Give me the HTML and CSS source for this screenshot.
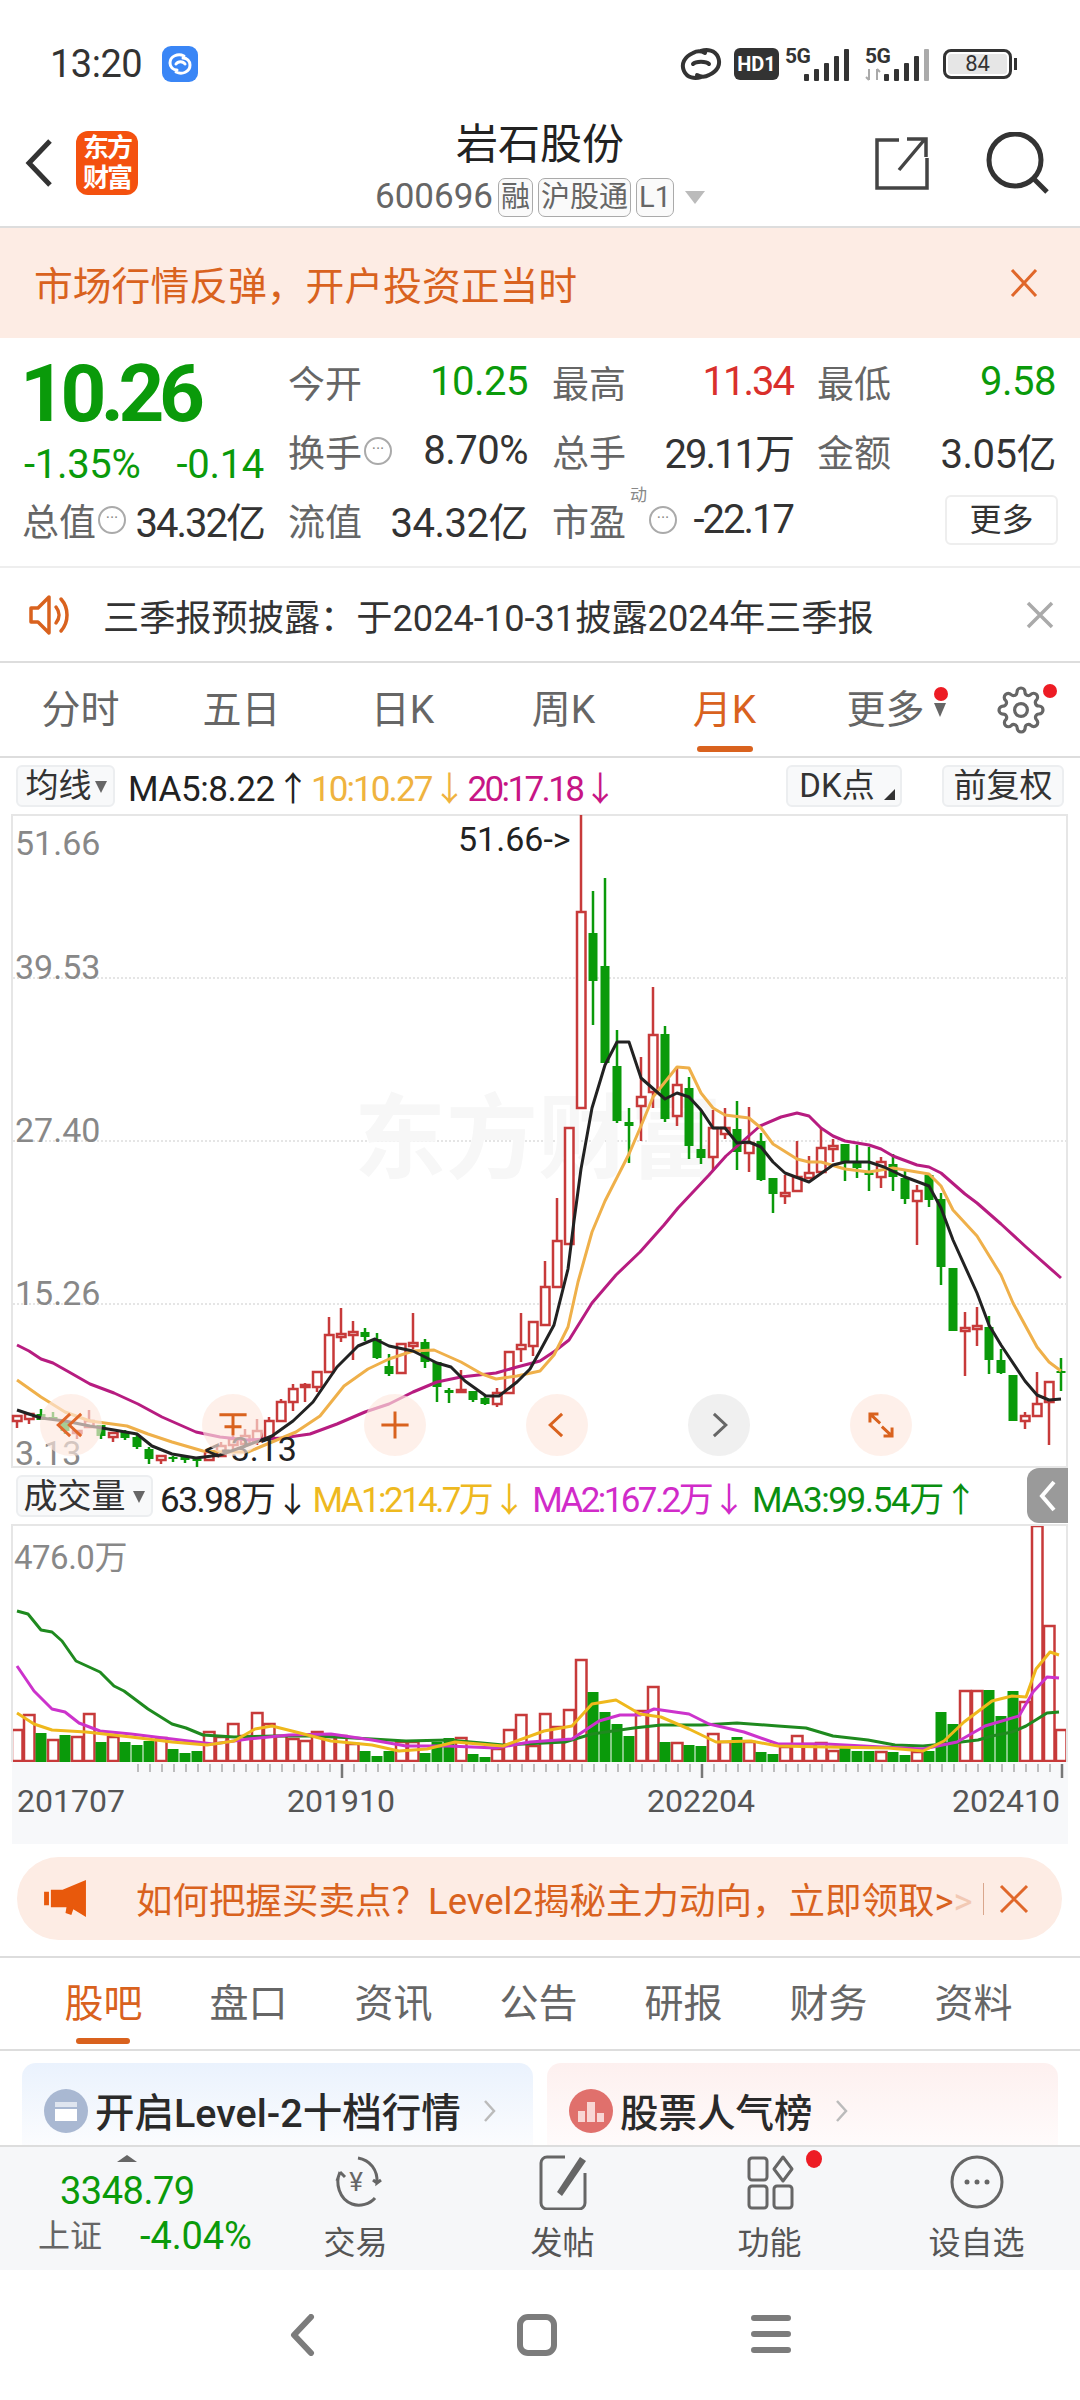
FILE: index.html
```html
<!DOCTYPE html>
<html lang="zh-CN">
<head>
    <meta charset="UTF-8">
    <meta name="viewport" content="width=device-width, initial-scale=1.0">
    <title>岩石股份</title>
    <link rel="stylesheet" href="styles.css">
</head>
<body>
    <div class="status">
        <span class="clock">13:20</span>
        <svg class="app-badge" viewBox="0 0 36 36">
            <rect width="36" height="36" rx="9" fill="#3a86f6"/>
            <path d="M22 10c-6-3-14 0-14 7 0 4 3 7 7 7M14 26c6 3 14 0 14-7 0-4-3-7-7-7M14 18c2-3 7-3 9 0" fill="none" stroke="#fff" stroke-width="3" stroke-linecap="round"/>
        </svg>
        <div class="status-right">
            <svg class="st-link" viewBox="0 0 44 34">
                <path d="M26 6a12 12 0 0 0-12 0C5 10 2 17 5 24c3 7 11 8 17 6M18 28a12 12 0 0 0 12 0c9-4 12-11 9-18-3-7-11-8-17-6M14 17c3-3 13-3 16 0" fill="none" stroke="#333" stroke-width="4" stroke-linecap="round"/>
            </svg>
            <span class="hd">HD1</span>
            <svg class="st-signal" viewBox="0 0 66 34">
                <text x="0" y="16" class="st-5g">5G</text>
                <rect x="19" y="27" width="5" height="7" rx="1" fill="#333"/>
                <rect x="29" y="22" width="5" height="12" rx="1" fill="#333"/>
                <rect x="39" y="16" width="5" height="18" rx="1" fill="#333"/>
                <rect x="49" y="9" width="5" height="25" rx="1" fill="#333"/>
                <rect x="59" y="2" width="5" height="32" rx="1" fill="#333"/>
            </svg>
            <svg class="st-signal" viewBox="0 0 66 34">
                <text x="0" y="16" class="st-5g">5G</text>
                <path d="M4 22v11M1 30l3 3M12 33v-11M15 25l-3-3" stroke="#aaa" stroke-width="2" fill="none"/>
                <rect x="19" y="27" width="5" height="7" rx="1" fill="#333"/>
                <rect x="29" y="22" width="5" height="12" rx="1" fill="#333"/>
                <rect x="39" y="16" width="5" height="18" rx="1" fill="#333"/>
                <rect x="49" y="9" width="5" height="25" rx="1" fill="#333"/>
                <rect x="59" y="2" width="5" height="32" rx="1" fill="#aaa"/>
            </svg>
            <span class="battery"><span class="battery-level">84</span></span>
        </div>
    </div>

    <header class="header">
        <div class="header-left">
            <svg class="back" viewBox="0 0 28 50"><path d="M25 3L4 25l21 22" fill="none" stroke="#333" stroke-width="5"/></svg>
            <div class="logo">东方<br>财富</div>
        </div>
        <div class="header-mid">
            <div class="title">岩石股份</div>
            <div class="sub">
                <span class="code">600696</span>
                <span class="tag">融</span>
                <span class="tag">沪股通</span>
                <span class="tag">L1</span>
                <span class="sub-caret"></span>
            </div>
        </div>
        <div class="header-right">
            <svg class="share" viewBox="0 0 54 54"><path d="M24 4H2v48h50V22M24 34L50 3M32 3h19v18" fill="none" stroke="#444" stroke-width="3.5"/></svg>
            <svg class="search" viewBox="0 0 66 62"><circle cx="30" cy="28" r="26" fill="none" stroke="#333" stroke-width="5"/><path d="M48 46l14 14" stroke="#333" stroke-width="5"/></svg>
        </div>
    </header>

    <div class="banner">
        <span>市场行情反弹&#xFF0C;开户投资正当时</span>
        <svg class="banner-x" viewBox="0 0 28 28"><path d="M2 1l24 26M26 1L2 27" stroke="#e0672a" stroke-width="3"/></svg>
    </div>

    <section class="quote">
        <div class="price-box">
            <div class="price">10.26</div>
            <div class="price-change"><span>-1.35%</span><span>-0.14</span></div>
        </div>
        <div class="stat"><span class="lbl">今开</span><span class="val green">10.25</span></div>
        <div class="stat"><span class="lbl">最高</span><span class="val red tight">11.34</span></div>
        <div class="stat"><span class="lbl">最低</span><span class="val green">9.58</span></div>
        <div class="stat"><span class="lbl">换手<i class="dots">···</i></span><span class="val">8.70%</span></div>
        <div class="stat"><span class="lbl">总手</span><span class="val tight">29.11万</span></div>
        <div class="stat"><span class="lbl">金额</span><span class="val">3.05亿</span></div>
        <div class="stat stat-first"><span class="lbl">总值<i class="dots">···</i></span><span class="val tight">34.32亿</span></div>
        <div class="stat"><span class="lbl">流值</span><span class="val">34.32亿</span></div>
        <div class="stat"><span class="lbl">市盈<sup class="dyn">动</sup><i class="dots">···</i></span><span class="val tight">-22.17</span></div>
        <div class="stat stat-more"><span class="more-btn">更多</span></div>
    </section>

    <div class="notice">
        <svg class="speaker" viewBox="0 0 48 42">
            <path d="M3 14h7L21 3v36L10 28H3z" fill="none" stroke="#d9621e" stroke-width="3.5" stroke-linejoin="round"/>
            <path d="M28 13c4 5 4 11 0 16M33 5c8 9 8 23 0 32" fill="none" stroke="#d9621e" stroke-width="3.5" stroke-linecap="round"/>
        </svg>
        <span class="notice-text">三季报预披露&#xFF1A;于2024-10-31披露2024年三季报</span>
        <svg class="notice-x" viewBox="0 0 30 30"><path d="M3 3l24 24M27 3L3 27" stroke="#aaa" stroke-width="3.5"/></svg>
    </div>

    <nav class="period-tabs">
        <span>分时</span>
        <span>五日</span>
        <span>日K</span>
        <span>周K</span>
        <span class="active">月K</span>
        <span class="more-tab">更多<i class="tab-caret"></i><i class="red-dot"></i></span>
        <span class="gear-tab">
            <svg class="gear" viewBox="0 0 24 24"><circle cx="12" cy="12" r="3.2" fill="none" stroke="#666" stroke-width="1.6"/><path d="M19.4 15a1.65 1.65 0 0 0 .33 1.82l.06.06a2 2 0 0 1 0 2.83 2 2 0 0 1-2.83 0l-.06-.06a1.65 1.65 0 0 0-1.82-.33 1.65 1.65 0 0 0-1 1.51V21a2 2 0 0 1-2 2 2 2 0 0 1-2-2v-.09A1.65 1.65 0 0 0 9 19.4a1.65 1.65 0 0 0-1.82.33l-.06.06a2 2 0 0 1-2.83 0 2 2 0 0 1 0-2.83l.06-.06a1.65 1.65 0 0 0 .33-1.82 1.65 1.65 0 0 0-1.51-1H3a2 2 0 0 1-2-2 2 2 0 0 1 2-2h.09A1.65 1.65 0 0 0 4.6 9a1.65 1.65 0 0 0-.33-1.82l-.06-.06a2 2 0 0 1 0-2.83 2 2 0 0 1 2.83 0l.06.06a1.65 1.65 0 0 0 1.82.33H9a1.65 1.65 0 0 0 1-1.51V3a2 2 0 0 1 2-2 2 2 0 0 1 2 2v.09a1.65 1.65 0 0 0 1 1.51 1.65 1.65 0 0 0 1.82-.33l.06-.06a2 2 0 0 1 2.83 0 2 2 0 0 1 0 2.83l-.06.06a1.65 1.65 0 0 0-.33 1.82V9a1.65 1.65 0 0 0 1.51 1H21a2 2 0 0 1 2 2 2 2 0 0 1-2 2h-.09a1.65 1.65 0 0 0-1.51 1z" fill="none" stroke="#666" stroke-width="1.6"/></svg>
            <i class="red-dot gear-dot"></i>
        </span>
    </nav>

    <div class="ma-bar">
        <span class="pick pick-ma">均线<i class="pick-caret"></i></span>
        <span class="ma ma-black ma5">MA5:8.22<b>↑</b></span>
        <span class="ma ma-orange">10:10.27<b>↓</b></span>
        <span class="ma ma-purple">20:17.18<b>↓</b></span>
        <span class="pick pick-dk">DK点<i class="corner"></i></span>
        <span class="pick pick-fq">前复权</span>
    </div>

    <div class="chart-box kline-box">
        <svg id="kline" class="kline" viewBox="13 817 1053 650"></svg>
        <div class="chart-tools">
            <span class="tool"><svg viewBox="0 0 40 40"><path d="M19 7L5 20l14 13M32 7L18 20l14 13" fill="none" stroke="#e0672a" stroke-width="3.5"/></svg></span>
            <span class="tool"><svg viewBox="0 0 40 40"><path d="M4 8h32M20 8v24M10 22h20" fill="none" stroke="#d9621e" stroke-width="3.5"/></svg></span>
            <span class="tool"><svg viewBox="0 0 40 40"><path d="M4 20h32M20 4v32" fill="none" stroke="#d9621e" stroke-width="3.5"/></svg></span>
            <span class="tool"><svg viewBox="0 0 40 40"><path d="M26 7L12 20l14 13" fill="none" stroke="#d9621e" stroke-width="3.5"/></svg></span>
            <span class="tool tool-gray"><svg viewBox="0 0 40 40"><path d="M14 7l14 13-14 13" fill="none" stroke="#666" stroke-width="3.5"/></svg></span>
            <span class="tool"><svg viewBox="0 0 40 40"><path d="M7 17V7h10M7 7l12 11M33 23v10H23M33 33L21 22" fill="none" stroke="#d9621e" stroke-width="3.5"/></svg></span>
        </div>
    </div>

    <div class="vol-bar">
        <span class="pick pick-vol">成交量<i class="pick-caret"></i></span>
        <span class="ma ma-black vol-now">63.98万<b>↓</b></span>
        <span class="ma ma-yellow">MA1:214.7万<b>↓</b></span>
        <span class="ma ma-pink">MA2:167.2万<b>↓</b></span>
        <span class="ma ma-green">MA3:99.54万<b>↑</b></span>
        <span class="vol-tab"><svg viewBox="0 0 20 34"><path d="M16 3L4 17l12 14" fill="none" stroke="#fff" stroke-width="4"/></svg></span>
    </div>

    <div class="chart-box vol-box">
        <svg id="volume" class="volume" viewBox="13 1527 1053 236"></svg>
    </div>
    <svg id="axis" class="axis" viewBox="12 1763 1056 82"></svg>

    <div class="promo">
        <svg class="mega" viewBox="0 0 44 38"><path d="M0 12h5v14H0zM7 10h12L43 0v38L30 30l-2 6-6-2 1-6H7z" fill="#e8590c"/></svg>
        <span class="promo-text">如何把握买卖点&#xFF1F;Level2揭秘主力动向&#xFF0C;立即领取&gt;<em>&gt;</em></span>
        <i class="promo-sep"></i>
        <svg class="promo-x" viewBox="0 0 30 30"><path d="M2 2l26 26M28 2L2 28" stroke="#e0672a" stroke-width="3"/></svg>
    </div>

    <nav class="info-tabs">
        <span class="active">股吧</span>
        <span>盘口</span>
        <span>资讯</span>
        <span>公告</span>
        <span>研报</span>
        <span>财务</span>
        <span>资料</span>
    </nav>

    <div class="cards">
        <div class="card card-blue">
            <svg class="card-icon" viewBox="0 0 44 44"><circle cx="22" cy="22" r="22" fill="#a9b8d2"/><rect x="11" y="13" width="22" height="5" fill="#dfe5ef"/><rect x="11" y="20" width="22" height="12" fill="#fff"/></svg>
            <span class="card-text">开启Level-2十档行情</span>
            <svg class="card-arrow" viewBox="0 0 14 24"><path d="M2 2l9 10-9 10" fill="none" stroke="#bbb" stroke-width="2.5"/></svg>
        </div>
        <div class="card card-red">
            <svg class="card-icon" viewBox="0 0 44 44"><circle cx="22" cy="22" r="22" fill="#e0706c"/><path d="M9 33V22h7v11zM18 33V13h8v20zM28 33V24h7v9z" fill="#f8d6d4"/></svg>
            <span class="card-text">股票人气榜</span>
            <svg class="card-arrow" viewBox="0 0 14 24"><path d="M2 2l9 10-9 10" fill="none" stroke="#bbb" stroke-width="2.5"/></svg>
        </div>
    </div>

    <footer class="dock">
        <div class="index">
            <i class="index-caret"></i>
            <div class="index-val">3348.79</div>
            <div class="index-row"><span class="index-name">上证</span><span class="index-pct">-4.04%</span></div>
        </div>
        <div class="dock-item">
            <svg class="dock-icon" viewBox="0 0 60 56">
                <path d="M14 18c-5 11-1 27 12 32 8 3 18 0 23-6M32 4c12 2 20 12 19 25l4-3M51 29l-4-3M14 18l-3 9M14 18l5 5" fill="none" stroke="#666" stroke-width="3"/>
                <text x="30" y="37" class="dock-yen">¥</text>
            </svg>
            <span>交易</span>
        </div>
        <div class="dock-item">
            <svg class="dock-icon" viewBox="0 0 60 56">
                <path d="M32 3H14a6 6 0 0 0-6 6v40a6 6 0 0 0 6 6h32a6 6 0 0 0 6-6V19" fill="none" stroke="#666" stroke-width="3"/>
                <path d="M24 38L47 3l6 4-24 35z" fill="#666"/>
            </svg>
            <span>发帖</span>
        </div>
        <div class="dock-item">
            <svg class="dock-icon" viewBox="0 0 60 56">
                <rect x="9" y="4" width="18" height="22" rx="3" fill="none" stroke="#666" stroke-width="3"/>
                <rect x="9" y="32" width="18" height="22" rx="3" fill="none" stroke="#666" stroke-width="3"/>
                <rect x="34" y="32" width="18" height="22" rx="3" fill="none" stroke="#666" stroke-width="3"/>
                <path d="M43 3l9 12-9 12-9-12z" fill="none" stroke="#666" stroke-width="3" stroke-linejoin="round"/>
            </svg>
            <i class="red-dot dock-dot"></i>
            <span>功能</span>
        </div>
        <div class="dock-item">
            <svg class="dock-icon" viewBox="0 0 60 56">
                <circle cx="30" cy="28" r="25" fill="none" stroke="#666" stroke-width="3"/>
                <circle cx="20" cy="28" r="2.5" fill="#666"/><circle cx="30" cy="28" r="2.5" fill="#666"/><circle cx="40" cy="28" r="2.5" fill="#666"/>
            </svg>
            <span>设自选</span>
        </div>
    </footer>

    <div class="sysnav">
        <svg class="sys-back" viewBox="0 0 26 42"><path d="M22 3L5 21l17 18" fill="none" stroke="#7c7c7c" stroke-width="6" stroke-linecap="round" stroke-linejoin="round"/></svg>
        <svg class="sys-home" viewBox="0 0 40 42"><rect x="3" y="3" width="34" height="36" rx="8" fill="none" stroke="#7c7c7c" stroke-width="6"/></svg>
        <svg class="sys-menu" viewBox="0 0 40 40"><path d="M3 4h34M3 20h34M3 36h34" stroke="#7c7c7c" stroke-width="6" stroke-linecap="round"/></svg>
    </div>

    <script src="chart.js"></script>
</body>
</html>
```

FILE: styles.css
```css
* {
    box-sizing: border-box;
}

body {
    margin: 0;
    width: 1080px;
    height: 2400px;
    overflow: hidden;
    background: #fff;
    color: #333;
    font-family: Roboto, "Noto Sans CJK SC", sans-serif;
}

i, em {
    font-style: normal;
}

/* status bar */
.status {
    height: 110px;
    padding: 46px 68px 0 50px;
    display: flex;
    align-items: flex-start;
}

.clock {
    font-size: 38px;
    line-height: 36px;
    color: #333;
    letter-spacing: -0.5px;
}

.app-badge {
    width: 36px;
    height: 36px;
    margin-left: 20px;
}

.status-right {
    margin-left: auto;
    display: flex;
    align-items: center;
    height: 36px;
}

.st-link {
    width: 44px;
    height: 34px;
}

.hd {
    margin-left: 11px;
    width: 45px;
    height: 32px;
    line-height: 32px;
    background: #333;
    color: #fff;
    border-radius: 6px;
    font-size: 20px;
    font-weight: 700;
    text-align: center;
}

.st-signal {
    margin-left: 6px;
    width: 66px;
    height: 34px;
    overflow: visible;
}

.st-signal + .st-signal {
    margin-left: 14px;
}

.st-5g {
    font-size: 21px;
    font-weight: 700;
    fill: #333;
    letter-spacing: -0.5px;
}

.battery {
    margin-left: 12px;
    width: 69px;
    height: 30px;
    border: 3px solid #333;
    border-radius: 8px;
    padding: 2px;
    position: relative;
}

.battery::after {
    content: "";
    position: absolute;
    right: -8px;
    top: 6px;
    width: 3px;
    height: 12px;
    background: #333;
}

.battery-level {
    display: block;
    height: 20px;
    line-height: 20px;
    background: #e6e6e6;
    border-radius: 3px;
    font-size: 22px;
    text-align: center;
}

/* header */
.header {
    height: 118px;
    display: grid;
    grid-template-columns: 240px 1fr 240px;
    border-bottom: 2px solid #ddd;
}

.header-left {
    display: flex;
    align-items: center;
    padding: 0 0 10px 25px;
}

.back {
    width: 28px;
    height: 50px;
}

.logo {
    margin-left: 23px;
    width: 62px;
    height: 64px;
    padding-top: 2px;
    border-radius: 12px;
    background: #f4510f;
    color: #fff;
    font-size: 26px;
    line-height: 30px;
    font-weight: 700;
    text-align: center;
    letter-spacing: -2px;
}

.header-mid {
    text-align: center;
    padding-top: 10px;
}

.title {
    font-size: 42px;
    line-height: 50px;
    color: #222;
}

.sub {
    margin-top: 7px;
    display: flex;
    justify-content: center;
    align-items: center;
    gap: 5px;
}

.code {
    font-size: 35px;
    line-height: 40px;
    color: #666;
}

.tag {
    height: 39px;
    padding: 0 2px;
    line-height: 36px;
    border: 1.5px solid #aaa;
    border-radius: 7px;
    background: #fafafa;
    color: #666;
    font-size: 29px;
}

.sub-caret {
    margin-left: 6px;
    border-left: 10px solid transparent;
    border-right: 10px solid transparent;
    border-top: 13px solid #bbb;
}

.header-right {
    display: flex;
    justify-content: flex-end;
    align-items: center;
    gap: 56px;
    padding: 0 29px 10px 0;
}

.share {
    width: 54px;
    height: 54px;
}

.search {
    width: 66px;
    height: 62px;
}

/* open account banner */
.banner {
    height: 110px;
    padding: 0 42px 0 34px;
    display: flex;
    align-items: center;
    justify-content: space-between;
    background: #fdece4;
    color: #d9621e;
    font-size: 38.8px;
}

.banner-x {
    width: 28px;
    height: 28px;
}

/* quote block */
.quote {
    height: 230px;
    padding: 9px 24px 0;
    display: grid;
    grid-template-columns: 240px 240px 241px 239px;
    grid-template-rows: repeat(3, 69px);
    column-gap: 24px;
    border-bottom: 2px solid #eee;
}

.price-box {
    grid-row: span 2;
}

.price {
    padding-top: 5px;
    font-size: 80px;
    line-height: 84px;
    font-weight: 700;
    color: #0a9a0a;
    letter-spacing: -5.5px;
    margin-left: -4px;
}

.price-change {
    margin-top: 7px;
    display: flex;
    justify-content: space-between;
    font-size: 40px;
    line-height: 44px;
    color: #0a9a0a;
    letter-spacing: -0.3px;
}

.stat {
    display: flex;
    justify-content: space-between;
    align-items: center;
    font-size: 37px;
}

.stat-first {
    margin-left: -2px;
}

.lbl {
    color: #666;
    display: flex;
    align-items: center;
    position: relative;
}

.val {
    color: #333;
    font-size: 40px;
    letter-spacing: -0.5px;
}

.val.tight {
    letter-spacing: -2px;
}

.val.green {
    color: #0a9a0a;
}

.val.red {
    color: #d9302c;
}

.dots {
    margin-left: 2px;
    width: 28px;
    height: 28px;
    line-height: 20px;
    border: 2px solid #aaa;
    border-radius: 50%;
    color: #888;
    font-size: 16px;
    text-align: center;
}

.dyn {
    position: absolute;
    left: 78px;
    top: -8px;
    font-size: 17px;
    line-height: 20px;
    color: #888;
}

.lbl .dyn + .dots {
    margin-left: 23px;
}

.stat-more {
    justify-content: flex-end;
    margin-right: -2px;
}

.more-btn {
    width: 113px;
    height: 50px;
    line-height: 46px;
    border: 2px solid #eee;
    border-radius: 6px;
    font-size: 32px;
    text-align: center;
    color: #333;
}

/* notice */
.notice {
    height: 95px;
    padding: 0 25px 0 28px;
    display: flex;
    align-items: center;
    border-bottom: 2px solid #ddd;
}

.speaker {
    width: 48px;
    height: 42px;
}

.notice-text {
    margin-left: 27px;
    font-size: 36.2px;
    color: #333;
}

.notice-x {
    margin-left: auto;
    width: 30px;
    height: 30px;
}

/* period tabs */
.period-tabs {
    height: 95px;
    display: grid;
    grid-template-columns: repeat(6, 161px) 1fr;
    border-bottom: 2px solid #ddd;
    font-size: 39px;
    color: #666;
    text-align: center;
}

.period-tabs span {
    position: relative;
    line-height: 95px;
}

.period-tabs .active {
    color: #d9621e;
}

.period-tabs .active::after {
    content: "";
    position: absolute;
    left: 53px;
    bottom: 6px;
    width: 56px;
    height: 6px;
    border-radius: 3px;
    background: #d9621e;
}

.tab-caret {
    position: absolute;
    left: 129px;
    top: 40px;
    border-left: 6px solid transparent;
    border-right: 6px solid transparent;
    border-top: 14px solid #666;
}

.red-dot {
    position: absolute;
    width: 14px;
    height: 14px;
    border-radius: 50%;
    background: #ed1c24;
}

.more-tab .red-dot {
    left: 129px;
    top: 24px;
}

.gear {
    position: absolute;
    left: 31px;
    top: 23px;
    width: 48px;
    height: 48px;
}

.gear-dot {
    left: 77px;
    top: 21px;
}

/* MA legend rows */
.ma-bar,
.vol-bar {
    height: 56px;
    padding: 0 16px;
    display: flex;
    align-items: center;
    position: relative;
    font-size: 35px;
}

.pick {
    height: 42px;
    line-height: 38px;
    border: 2px solid #eceef0;
    border-radius: 6px;
    background: #f8f9fa;
    color: #333;
    font-size: 33px;
    position: relative;
    text-align: center;
}

.pick-ma {
    width: 99px;
    padding-right: 14px;
}

.pick-vol {
    width: 137px;
    padding-right: 20px;
    font-size: 34px;
}

.pick-caret {
    position: absolute;
    right: 6px;
    top: 14px;
    border-left: 6px solid transparent;
    border-right: 6px solid transparent;
    border-top: 12px solid #666;
}

.pick-dk {
    margin-left: auto;
    width: 116px;
    padding-right: 14px;
}

.pick-fq {
    margin-left: 40px;
    width: 122px;
}

.corner {
    position: absolute;
    right: 5px;
    bottom: 5px;
    border-left: 11px solid transparent;
    border-bottom: 11px solid #333;
}

.ma {
    white-space: nowrap;
    margin-left: 13px;
    letter-spacing: -2.6px;
}

.ma b {
    font-weight: 400;
    font-size: 34px;
    letter-spacing: 0;
    margin-left: 1px;
}

.ma-bar .ma + .ma {
    margin-left: 1px;
}

.ma-bar .ma5 {
    letter-spacing: -0.4px;
}

.ma-bar .ma-orange {
    letter-spacing: -1.9px;
}

.vol-bar .ma {
    margin-left: 7px;
}

.vol-bar .ma + .ma {
    margin-left: 6px;
}

.vol-bar .vol-now + .ma {
    margin-left: 3px;
}

.vol-bar .vol-now {
    letter-spacing: -1.4px;
}

.vol-bar .ma-green {
    letter-spacing: -1.4px;
}

.ma-black {
    color: #222;
}

.ma-orange {
    color: #efb33f;
}

.ma-purple {
    color: #c71585;
}

.ma-yellow {
    color: #eeb91f;
}

.ma-pink {
    color: #d12bc9;
}

.ma-green {
    color: #0a8f10;
}

.vol-tab {
    position: absolute;
    right: 12px;
    top: 0;
    width: 41px;
    height: 55px;
    background: #9a9a9a;
    border-radius: 12px 0 0 12px;
    display: flex;
    align-items: center;
    justify-content: center;
}

.vol-tab svg {
    width: 20px;
    height: 34px;
}

/* charts */
.chart-box {
    margin: 0 12px 0 11px;
    border: 2px solid #e6e6e6;
    position: relative;
}

.kline-box {
    height: 654px;
}

.kline {
    display: block;
    width: 1053px;
    height: 650px;
    overflow: visible;
}

.vol-box {
    height: 238px;
    border-bottom: 0;
}

.volume {
    display: block;
    width: 1053px;
    height: 236px;
}

.watermark {
    font-size: 92px;
    font-weight: 700;
    fill: #f7f7f7;
}

.axis-label {
    font-size: 34px;
    fill: #888;
}

.price-mark {
    font-size: 34px;
    fill: #222;
}

.vol-label {
    font-size: 33px;
    fill: #888;
    letter-spacing: -0.5px;
}

.date-label {
    font-size: 32px;
    fill: #555;
}

.chart-tools {
    position: absolute;
    left: 27px;
    top: 578px;
    display: flex;
    gap: 100px;
}

.tool {
    width: 62px;
    height: 62px;
    border-radius: 50%;
    background: rgba(253, 232, 222, 0.65);
    display: flex;
    align-items: center;
    justify-content: center;
}

.tool-gray {
    background: rgba(230, 230, 230, 0.6);
}

.tool svg {
    width: 34px;
    height: 34px;
}

.axis {
    display: block;
    margin-left: 12px;
    width: 1056px;
    height: 82px;
    background: #f7f8fa;
}

/* promo */
.promo {
    margin: 13px 18px 16px 17px;
    height: 83px;
    padding: 0 33px 0 27px;
    display: flex;
    align-items: center;
    border-radius: 42px;
    background: #fdece4;
}

.mega {
    width: 43px;
    height: 37px;
}

.promo-text {
    margin-left: 49px;
    color: #d9621e;
    font-size: 36.5px;
    white-space: nowrap;
}

.promo-text em {
    color: #f2c9b4;
}

.promo-sep {
    margin-left: auto;
    width: 1px;
    height: 32px;
    background: #d9a68c;
}

.promo-x {
    margin-left: 15px;
    width: 30px;
    height: 30px;
}

/* info tabs */
.info-tabs {
    height: 95px;
    padding-left: 31px;
    display: grid;
    grid-template-columns: repeat(7, 145px);
    border-top: 2px solid #ddd;
    border-bottom: 2px solid #ddd;
    font-size: 39px;
    color: #666;
    text-align: center;
}

.info-tabs span {
    position: relative;
    line-height: 92px;
}

.info-tabs .active {
    color: #d9621e;
}

.info-tabs .active::after {
    content: "";
    position: absolute;
    left: 45px;
    bottom: 6px;
    width: 54px;
    height: 6px;
    border-radius: 3px;
    background: #d9621e;
}

/* cards under the tabs, cut by the dock */
.cards {
    height: 94px;
    padding: 12px 22px 0;
    display: grid;
    grid-template-columns: 511px 511px;
    column-gap: 14px;
    overflow: hidden;
}

.card {
    height: 82px;
    padding: 26px 0 0 22px;
    display: flex;
    align-items: flex-start;
    border-radius: 14px 14px 0 0;
}

.card-blue {
    background: linear-gradient(#eaf2fd, #fbfcfe);
}

.card-red {
    background: linear-gradient(#fdf0ef, #fffbfb);
}

.card-icon {
    width: 44px;
    height: 44px;
}

.card-text {
    margin: 3px 0 0 7px;
    font-size: 39.5px;
    line-height: 44px;
    font-weight: 500;
    color: #2a2a2a;
}

.card-red .card-text {
    font-size: 38.5px;
}

.card-arrow {
    margin: 10px 0 0 22px;
    width: 14px;
    height: 24px;
}

/* bottom dock */
.dock {
    height: 125px;
    display: grid;
    grid-template-columns: 252px repeat(4, 207px);
    border-top: 2px solid #ddd;
    background: #f6f7f9;
    position: relative;
}

.index {
    position: relative;
    padding: 23px 0 0 38px;
}

.index-caret {
    position: absolute;
    left: 117px;
    top: 8px;
    border-left: 10px solid transparent;
    border-right: 10px solid transparent;
    border-bottom: 7px solid #666;
}

.index-val {
    padding-left: 22px;
    font-size: 38px;
    line-height: 42px;
    color: #0a9a0a;
    letter-spacing: -0.5px;
}

.index-row {
    margin-top: 2px;
    display: flex;
    align-items: center;
    gap: 38px;
}

.index-name {
    font-size: 32px;
    line-height: 42px;
    color: #666;
}

.index-pct {
    font-size: 38px;
    color: #0a9a0a;
    letter-spacing: -0.1px;
}

.dock-item {
    display: flex;
    flex-direction: column;
    align-items: center;
    position: relative;
    padding-top: 7px;
    font-size: 32px;
    color: #555;
}

.dock-icon {
    width: 60px;
    height: 56px;
}

.dock-item span {
    margin-top: 10px;
    line-height: 46px;
}

.dock-yen {
    font-size: 26px;
    fill: #666;
    text-anchor: middle;
}

.dock-dot {
    left: 140px;
    top: 3px;
    width: 16px;
    height: 18px;
}

/* android nav */
.sysnav {
    height: 129px;
    position: relative;
    display: grid;
    grid-template-columns: 290px 227px 234px 1fr;
    align-items: start;
    padding-top: 44px;
}

.sys-back {
    grid-column: 2;
    width: 26px;
    height: 42px;
    margin-left: -1px;
}

.sys-home {
    grid-column: 3;
    width: 40px;
    height: 42px;
}

.sys-menu {
    grid-column: 4;
    width: 40px;
    height: 40px;
}
```

FILE: chart.js
```js
const NS = "http://www.w3.org/2000/svg";
const RED = "#c73a3a";
const GREEN = "#0a9a0a";

function add(svg, tag, attrs, text) {
    const el = document.createElementNS(NS, tag);
    for (const k in attrs) el.setAttribute(k, attrs[k]);
    if (text) el.textContent = text;
    svg.appendChild(el);
}

function line(svg, pts, color, width) {
    add(svg, "polyline", {
        points: pts.map(p => p.join(",")).join(" "),
        fill: "none",
        stroke: color,
        "stroke-width": width,
        "stroke-linejoin": "round"
    });
}

function slotX(i) {
    return 17 + i * 12;
}

// high, body top, body bottom, low, 1 = up. Values are screen y.
const candles = [
    [1417,1417,1422,1429,1],[1415,1415,1420,1425,1],[1410,1415,1421,1421,0],[1413,1418,1420,1421,0],
    [1420,1422,1432,1435,0],[1432,1432,1434,1440,1],[1411,1422,1428,1428,1],[1426,1426,1437,1440,0],
    [1434,1434,1438,1443,1],[1431,1433,1439,1441,0],[1436,1438,1448,1450,0],[1448,1450,1460,1465,0],
    [1457,1457,1461,1465,1],[1457,1458,1460,1463,0],[1458,1458,1461,1464,0],[1459,1460,1461,1468,0],
    [1453,1453,1461,1461,1],[1443,1447,1457,1457,1],[1436,1440,1446,1450,1],[1430,1437,1445,1448,1],
    [1420,1432,1442,1446,1],[1418,1422,1440,1440,1],[1400,1403,1422,1422,1],[1385,1390,1403,1412,1],
    [1384,1386,1388,1403,1],[1373,1373,1388,1393,1],[1318,1336,1373,1373,1],[1309,1335,1338,1343,1],
    [1322,1333,1336,1361,1],[1329,1333,1338,1342,0],[1334,1340,1359,1360,0],[1355,1367,1375,1377,0],
    [1345,1345,1374,1374,1],[1314,1344,1347,1350,1],[1340,1343,1363,1369,0],[1363,1363,1388,1403,0],
    [1389,1391,1394,1404,0],[1371,1391,1393,1394,1],[1392,1392,1401,1403,0],[1396,1399,1405,1406,0],
    [1389,1394,1405,1408,1],[1353,1353,1394,1394,1],[1314,1346,1350,1363,1],[1323,1323,1347,1357,1],
    [1262,1288,1326,1326,1],[1199,1242,1288,1288,1],[1129,1129,1245,1245,1],[816,913,1109,1109,1],
    [892,934,982,1026,0],[879,967,1064,1064,0],[1031,1067,1122,1124,0],[1109,1123,1127,1164,0],
    [1058,1098,1107,1142,1],[988,1036,1093,1109,1],[1027,1035,1120,1123,0],[1069,1086,1117,1127,1],
    [1078,1089,1147,1160,0],[1111,1150,1159,1165,0],[1111,1129,1158,1172,1],[1109,1129,1135,1140,1],
    [1102,1130,1153,1171,0],[1108,1144,1154,1173,1],[1134,1142,1181,1182,0],[1179,1179,1195,1214,0],
    [1176,1194,1197,1205,1],[1142,1178,1192,1192,1],[1157,1174,1179,1179,1],[1129,1149,1173,1173,1],
    [1140,1147,1150,1163,1],[1145,1145,1163,1182,0],[1146,1163,1169,1179,0],[1148,1174,1175,1192,0],
    [1158,1163,1178,1189,1],[1155,1165,1178,1192,0],[1172,1179,1200,1205,0],[1186,1192,1202,1246,1],
    [1176,1176,1201,1208,0],[1194,1200,1268,1286,0],[1269,1269,1332,1332,0],[1313,1329,1332,1377,1],
    [1308,1327,1330,1347,1],[1317,1328,1361,1375,0],[1350,1361,1374,1375,0],[1376,1376,1422,1422,0],
    [1413,1417,1422,1430,1],[1373,1405,1417,1417,1],[1383,1383,1403,1446,1],[1359,1372,1373,1392,0]
];

const kBlack = [[17,1411],[29,1415],[41,1419],[65,1422],[90,1427],[114,1431],[137,1435],[152,1447],[172,1455],[196,1459],[220,1456],[248,1446],[272,1437],[293,1422],[313,1403],[337,1368],[358,1347],[375,1340],[389,1347],[413,1352],[437,1364],[451,1368],[465,1382],[486,1397],[499,1397],[517,1383],[530,1370],[540,1352],[554,1326],[568,1270],[574,1222],[581,1170],[592,1109],[605,1066],[617,1043],[629,1043],[641,1079],[665,1100],[677,1094],[689,1098],[701,1111],[713,1129],[725,1129],[737,1144],[749,1143],[761,1148],[773,1163],[785,1174],[809,1183],[833,1166],[845,1163],[869,1163],[884,1168],[905,1178],[929,1187],[941,1209],[953,1241],[977,1294],[989,1326],[1001,1346],[1025,1382],[1037,1396],[1049,1401],[1061,1400]];

const kOrange = [[17,1381],[41,1398],[65,1413],[90,1422],[127,1427],[148,1435],[172,1443],[203,1452],[224,1453],[248,1453],[272,1443],[296,1433],[320,1417],[344,1387],[368,1370],[389,1360],[413,1352],[434,1351],[461,1363],[482,1375],[496,1380],[517,1377],[540,1372],[554,1356],[568,1328],[578,1283],[592,1233],[605,1202],[629,1155],[641,1127],[653,1098],[677,1068],[689,1069],[701,1094],[713,1109],[725,1116],[749,1119],[761,1129],[773,1145],[797,1160],[809,1163],[821,1163],[845,1170],[869,1173],[893,1169],[929,1175],[941,1187],[953,1211],[977,1237],[1001,1276],[1013,1304],[1037,1348],[1049,1363],[1061,1372]];

const kPurple = [[17,1346],[29,1352],[41,1360],[53,1364],[69,1373],[90,1385],[114,1394],[138,1405],[162,1418],[196,1433],[220,1438],[248,1441],[282,1439],[310,1435],[337,1425],[365,1413],[389,1405],[413,1393],[437,1383],[461,1378],[496,1374],[517,1368],[540,1362],[555,1352],[569,1341],[592,1304],[616,1276],[640,1253],[664,1226],[678,1209],[709,1176],[726,1157],[760,1127],[781,1118],[797,1114],[809,1117],[821,1129],[833,1137],[845,1142],[869,1146],[881,1150],[893,1157],[917,1166],[929,1168],[941,1174],[965,1195],[977,1204],[1001,1225],[1026,1248],[1061,1279]];

// bar top y, 1 = up
const volumes = [
    [1731,1],[1716,1],[1734,0],[1741,1],[1736,0],[1738,1],[1715,1],[1743,0],[1738,1],[1743,0],[1746,0],[1742,0],
    [1739,1],[1750,0],[1754,0],[1752,0],[1733,1],[1738,1],[1725,1],[1737,1],[1714,1],[1725,1],[1737,1],[1740,1],
    [1742,1],[1733,1],[1738,1],[1737,1],[1745,1],[1752,0],[1757,0],[1752,0],[1743,1],[1743,1],[1754,0],[1743,0],
    [1739,0],[1739,1],[1755,0],[1758,0],[1750,1],[1731,1],[1716,1],[1747,1],[1715,1],[1728,1],[1711,1],[1661,1],
    [1693,0],[1713,0],[1725,0],[1737,0],[1712,1],[1688,1],[1743,0],[1744,1],[1746,0],[1747,0],[1735,1],[1743,1],
    [1738,0],[1743,1],[1753,0],[1755,0],[1748,1],[1737,1],[1745,1],[1744,1],[1752,1],[1749,0],[1752,0],[1752,0],
    [1753,1],[1753,0],[1756,0],[1753,1],[1752,0],[1713,0],[1725,0],[1692,1],[1692,1],[1691,0],[1717,0],[1692,0],
    [1703,1],[1527,1],[1627,1],[1731,1]
];

const vGreen = [[17,1612],[28,1615],[41,1631],[52,1633],[62,1642],[76,1662],[100,1673],[114,1687],[124,1692],[148,1710],[172,1725],[186,1729],[203,1736],[234,1738],[275,1737],[317,1737],[372,1740],[406,1742],[448,1741],[482,1744],[503,1746],[565,1743],[592,1735],[634,1729],[661,1726],[702,1726],[737,1724],[778,1727],[806,1729],[833,1737],[868,1741],[895,1746],[923,1747],[944,1745],[978,1741],[992,1737],[1012,1733],[1026,1727],[1047,1714],[1059,1713]];

const vPink = [[17,1667],[34,1692],[52,1710],[65,1713],[79,1724],[100,1732],[131,1735],[172,1740],[213,1745],[248,1740],[289,1736],[331,1735],[372,1741],[406,1747],[448,1747],[496,1749],[530,1743],[572,1740],[599,1722],[620,1716],[640,1716],[654,1710],[689,1715],[709,1725],[744,1733],[778,1745],[826,1745],[882,1748],[923,1750],[957,1743],[985,1727],[1019,1717],[1033,1693],[1047,1678],[1059,1679]];

const vYellow = [[17,1714],[34,1725],[52,1731],[86,1733],[131,1738],[172,1743],[207,1746],[234,1742],[255,1730],[272,1727],[296,1733],[331,1742],[372,1746],[399,1752],[427,1750],[455,1743],[503,1747],[544,1732],[572,1727],[592,1705],[616,1701],[640,1715],[661,1718],[689,1730],[716,1743],[751,1742],[778,1747],[826,1748],[888,1749],[923,1752],[944,1742],[964,1723],[992,1702],[1012,1697],[1026,1698],[1036,1670],[1050,1653],[1059,1656]];

function drawKline() {
    const svg = document.getElementById("kline");
    [979, 1142, 1305].forEach(y => {
        add(svg, "line", { x1: 13, x2: 1066, y1: y, y2: y, stroke: "#ddd", "stroke-width": 1.5, "stroke-dasharray": "2 2" });
    });
    add(svg, "text", { x: 354, y: 1172, class: "watermark" }, "东方财富");
    add(svg, "text", { x: 15, y: 856, class: "axis-label" }, "51.66");
    add(svg, "text", { x: 15, y: 980, class: "axis-label" }, "39.53");
    add(svg, "text", { x: 15, y: 1143, class: "axis-label" }, "27.40");
    add(svg, "text", { x: 15, y: 1306, class: "axis-label" }, "15.26");
    add(svg, "text", { x: 15, y: 1466, class: "axis-label" }, "3.13");

    candles.forEach((c, i) => {
        const x = slotX(i);
        const color = c[4] ? RED : GREEN;
        add(svg, "line", { x1: x, x2: x, y1: c[0], y2: c[3], stroke: color, "stroke-width": 2.5 });
        if (c[4]) {
            add(svg, "rect", { x: x - 4, y: c[1], width: 8.5, height: c[2] - c[1], fill: "#fff", stroke: color, "stroke-width": 2.5 });
        } else {
            add(svg, "rect", { x: x - 4.5, y: c[1], width: 9, height: Math.max(c[2] - c[1], 2), fill: color });
        }
    });

    line(svg, kPurple, "#b71c80", 3);
    line(svg, kOrange, "#efb04a", 3);
    line(svg, kBlack, "#222", 3);

    add(svg, "text", { x: 458, y: 852, class: "price-mark" }, "51.66->");
    add(svg, "text", { x: 204, y: 1462, class: "price-mark" }, "<-3.13");
}

function drawVolume() {
    const svg = document.getElementById("volume");
    add(svg, "text", { x: 14, y: 1570, class: "vol-label" }, "476.0万");
    volumes.forEach((v, i) => {
        const x = slotX(i);
        if (v[1]) {
            add(svg, "rect", { x: x - 5, y: v[0], width: 10.5, height: 1762 - v[0], fill: "#fff", stroke: RED, "stroke-width": 2.5 });
        } else {
            add(svg, "rect", { x: x - 5.5, y: v[0], width: 11, height: 1763 - v[0], fill: GREEN });
        }
    });
    line(svg, vGreen, "#1f8a1f", 3);
    line(svg, vPink, "#cc33cc", 3);
    line(svg, vYellow, "#efb81c", 3);
}

function drawAxis() {
    const svg = document.getElementById("axis");
    for (let x = 138; x <= 1062; x += 12) {
        const long = x === 342 || x === 702 || x === 1062;
        add(svg, "line", { x1: x, x2: x, y1: 1765, y2: long ? 1779 : 1773, stroke: long ? "#777" : "#aaa", "stroke-width": long ? 2.5 : 1.5 });
    }
    add(svg, "text", { x: 17, y: 1813, class: "date-label" }, "201707");
    add(svg, "text", { x: 341, y: 1813, class: "date-label", "text-anchor": "middle" }, "201910");
    add(svg, "text", { x: 701, y: 1813, class: "date-label", "text-anchor": "middle" }, "202204");
    add(svg, "text", { x: 1060, y: 1813, class: "date-label", "text-anchor": "end" }, "202410");
}

drawKline();
drawVolume();
drawAxis();
```
